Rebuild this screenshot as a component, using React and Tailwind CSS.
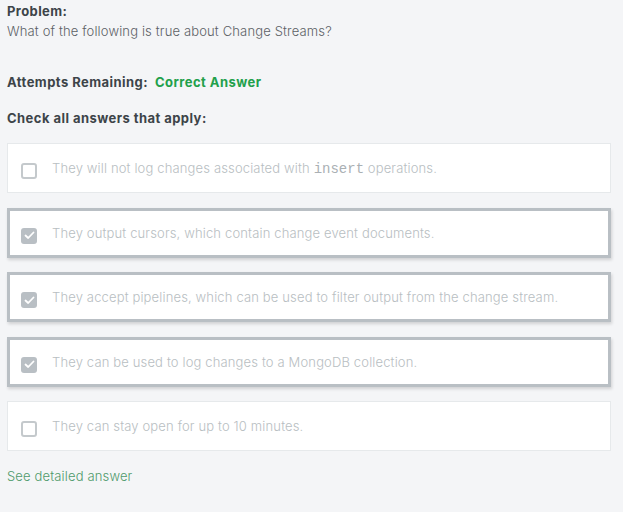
export default function App() {
  const options = [
    { text: 'They will not log changes associated with ', code: 'insert', after: ' operations.', checked: false },
    { text: 'They output cursors, which contain change event documents.', checked: true },
    { text: 'They accept pipelines, which can be used to filter output from the change stream.', checked: true },
    { text: 'They can be used to log changes to a MongoDB collection.', checked: true },
    { text: 'They can stay open for up to 10 minutes.', checked: false },
  ];

  return (
    <div className="min-h-[512px] w-[623px] bg-[#f4f5f7] px-[7px] pt-[2px] text-[13px] font-['Inter',sans-serif] tracking-[0.15px]">
      <div className="font-bold text-[#3d4449] leading-[18px] tracking-[0.4px]">Problem:</div>
      <div className="text-[#5c6166] font-light leading-[18px] mt-[2px]">What of the following is true about Change Streams?</div>

      <div className="mt-[33px] flex gap-[7px] font-bold leading-[18px] tracking-[0.45px]">
        <span className="text-[#3d4449]">Attempts Remaining:</span>
        <span className="text-[#22a04b]">Correct Answer</span>
      </div>

      <div className="mt-[18px] font-bold text-[#3d4449] leading-[18px] tracking-[0.45px]">Check all answers that apply:</div>

      <div className="mt-[16px] flex flex-col gap-[14.5px] w-[604px]">
        {options.map((o, i) => (
          <div
            key={i}
            className={
              o.checked
                ? 'h-[50px] bg-white border-[3px] border-[#b9bfc4] shadow-[1px_2px_3px_rgba(0,0,0,0.15)] flex items-center pl-[11px]'
                : 'h-[50px] bg-white border border-[#e6e9eb] flex items-center pl-[13px]'
            }
          >
            {o.checked ? (
              <div className="mt-[6px] w-[16px] h-[16px] rounded-[3px] bg-[#b9bfc4] flex items-center justify-center">
                <svg width="11" height="9" viewBox="0 0 11 9" fill="none">
                  <path d="M1.5 4.5 L4.2 7 L9.5 1.5" stroke="white" strokeWidth="1.8" strokeLinecap="round" strokeLinejoin="round" />
                </svg>
              </div>
            ) : (
              <div className="mt-[6px] w-[16px] h-[16px] rounded-[3px] border-2 border-[#c4c9cc] bg-white" />
            )}
            <div className="ml-[15px] text-[#b8bec2] font-light leading-[18px]">
              {o.text}
              {o.code && <span className="font-['Liberation_Mono',monospace] text-[14px] tracking-normal text-[#aab0b4]">{o.code}</span>}
              {o.after}
            </div>
          </div>
        ))}
      </div>

      <div className="mt-[16px] text-[#4f9a6b] font-light leading-[18px]">See detailed answer</div>
    </div>
  );
}
